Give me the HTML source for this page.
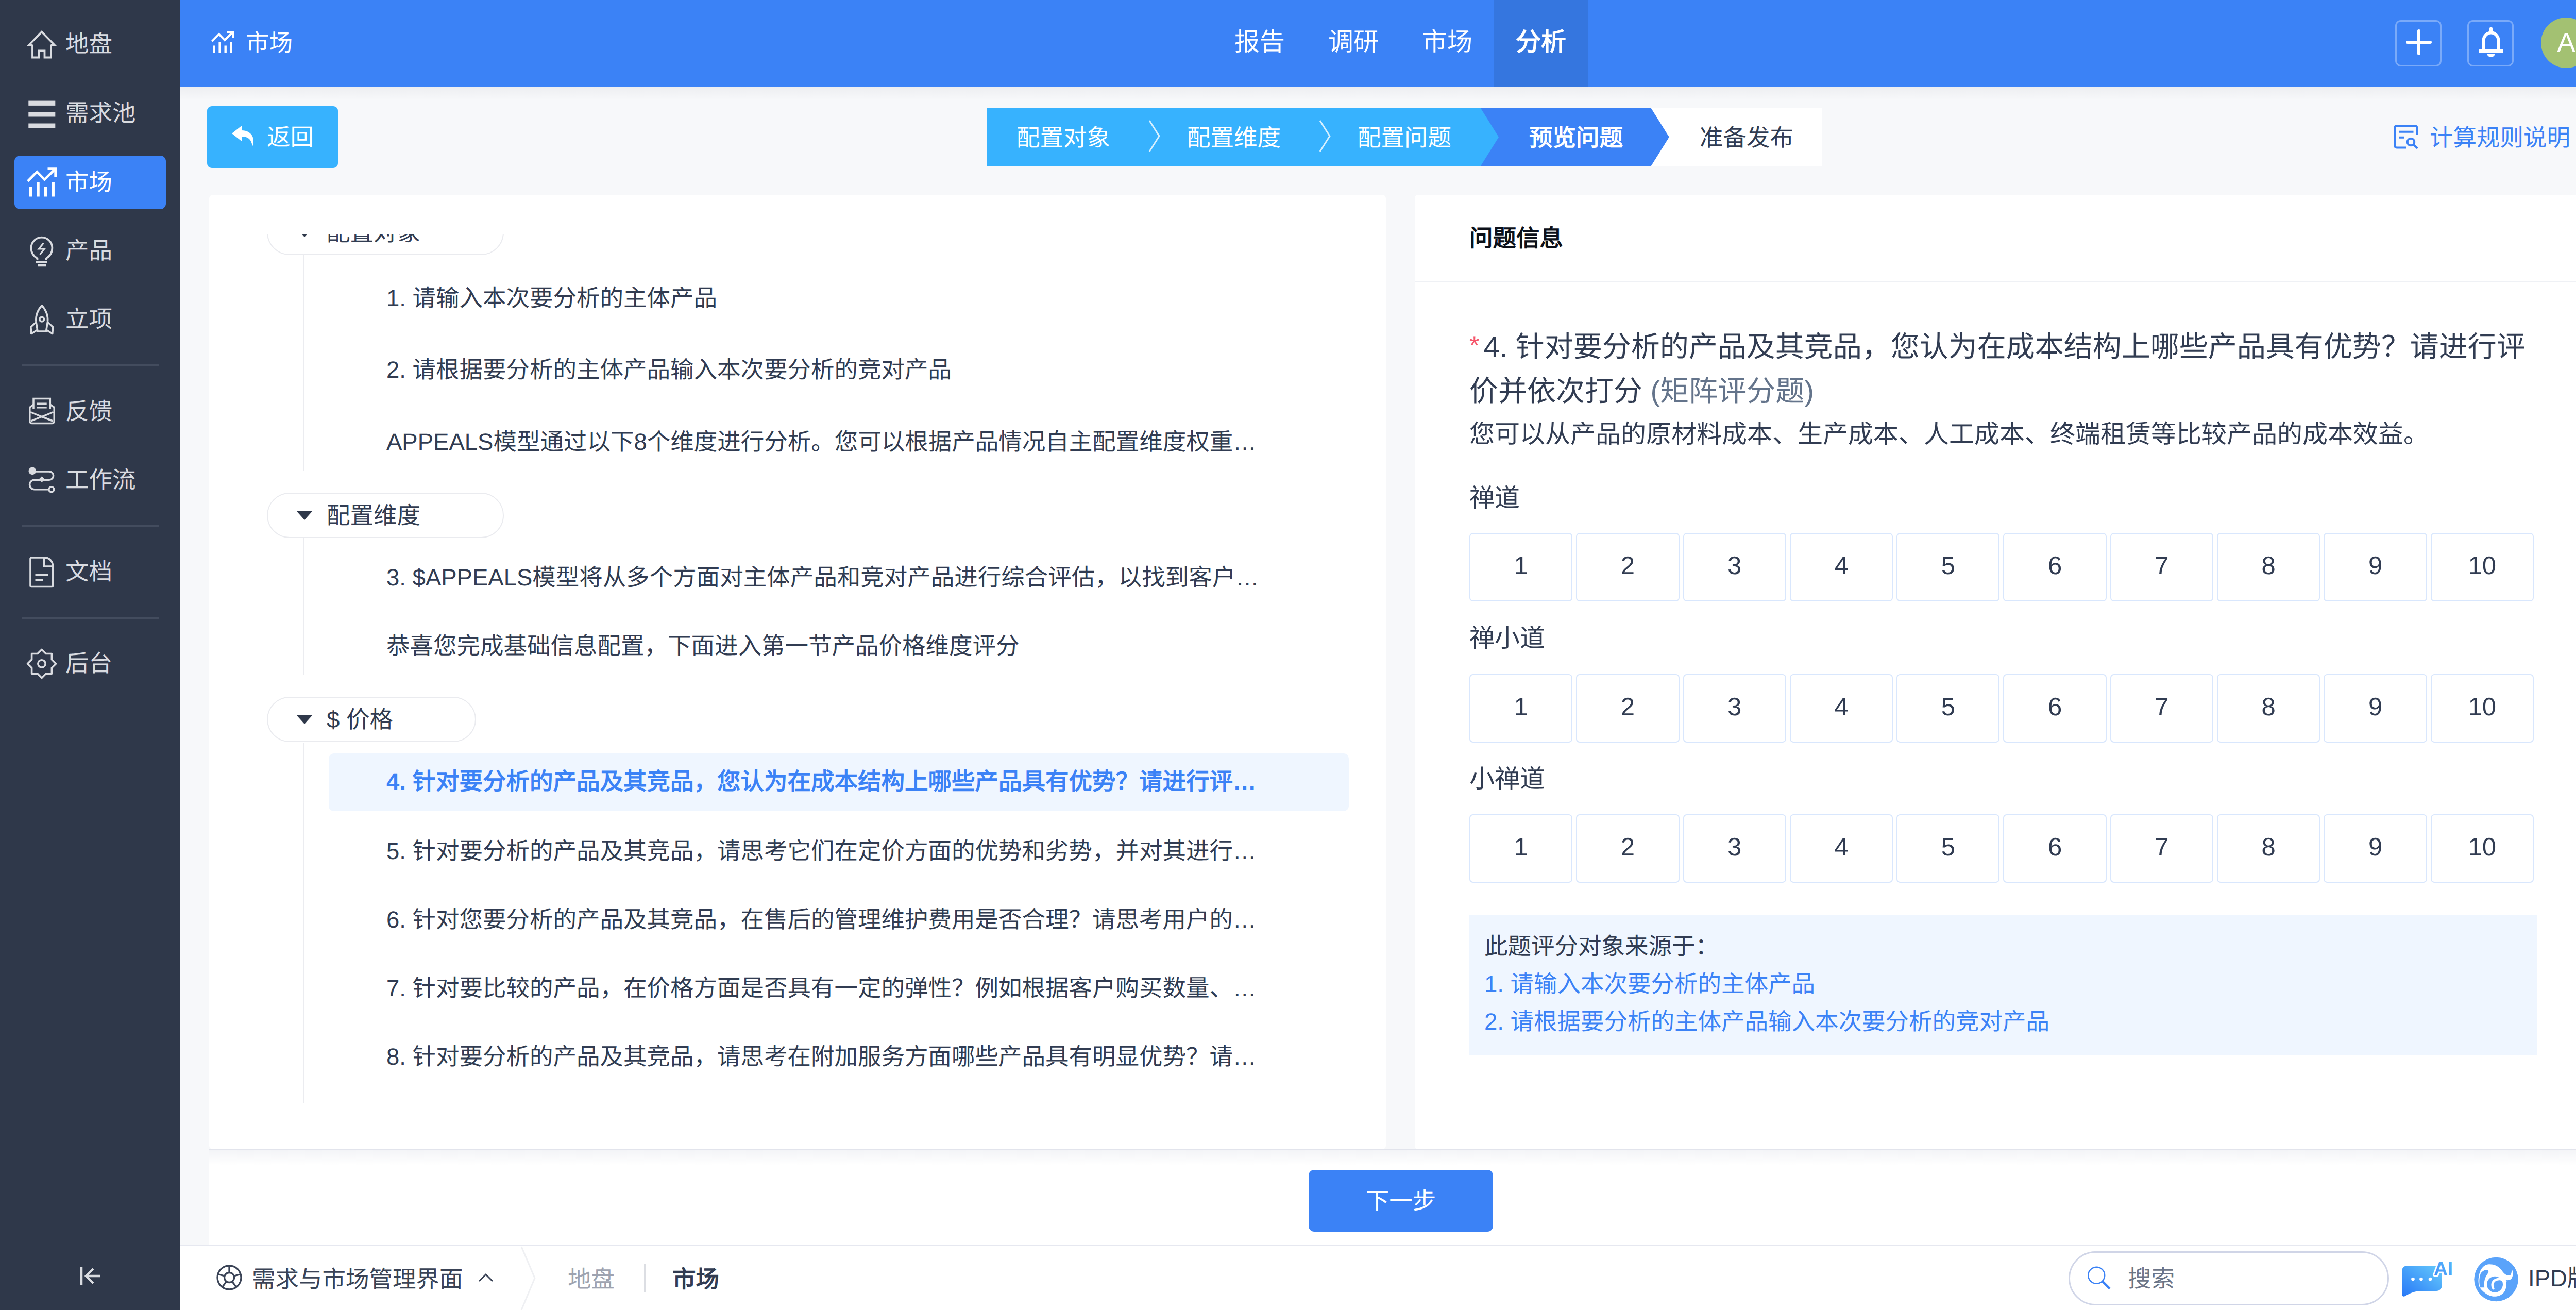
<!DOCTYPE html>
<html lang="zh-CN">
<head>
<meta charset="utf-8">
<title>市场 - 分析</title>
<style>
*{box-sizing:border-box;margin:0;padding:0}
html,body{width:5120px;height:2542px;overflow:hidden}
body{position:relative;background:#f7f8fa;font-family:"Liberation Sans",sans-serif;font-size:45.5px;color:#313c52;line-height:1;text-rendering:geometricPrecision}
.abs{position:absolute}
svg{display:block;overflow:visible}

/* ---------- sidebar ---------- */
#sidebar{position:absolute;left:0;top:0;width:350px;height:2542px;background:#2f384a}
.mi{position:absolute;left:28px;width:294px;height:103.500px;border-radius:11px;color:#d9dbe0;font-size:45.5px}
.mi.on{background:#3b82f6;color:#fff}
.mi svg{position:absolute;left:24px;top:23px;width:58px;height:58px}
.mi span{position:absolute;left:99px;top:0;height:103px;line-height:103px;white-space:nowrap}
.mdiv{position:absolute;left:42px;width:266px;height:3.5px;background:#434c5e}

/* ---------- header ---------- */
#header{position:absolute;left:350px;top:0;width:4736px;height:168px;background:#3b82f6}
#hshadow{position:absolute;left:350px;top:168px;width:4736px;height:26px;background:linear-gradient(#edeef1,#f7f8fa)}
.nav{position:absolute;top:0;height:168px;width:182px;text-align:center;color:#fff;font-size:49px;line-height:165px}
.nav.on{background:#3576df;font-weight:bold}
.hbtn{position:absolute;top:39px;width:90px;height:90px;border:3.5px solid rgba(255,255,255,.32);border-radius:11px}

/* ---------- toolbar ---------- */
#back{position:absolute;left:402px;top:206px;width:254px;height:120px;border-radius:9px;background:#37b2fe;color:#fff}
.step{position:absolute;top:210px;height:112px;color:#fff;line-height:116px;white-space:nowrap}

/* ---------- panels ---------- */
.panel{position:absolute;top:378px;height:1852px;background:#fff;border-radius:7px;overflow:hidden}
.pill{position:absolute;left:112px;height:88px;border:2px solid #eaebef;border-radius:44px;background:#fff;line-height:86px;white-space:nowrap}
.pill i{position:absolute;left:54.500px;top:33px;width:0;height:0;border-left:16px solid transparent;border-right:16px solid transparent;border-top:18px solid #2f384a}
.pill span{position:absolute;left:114px;top:0}
.vline{position:absolute;left:181.500px;width:2px;background:#ebecf0}
.row{position:absolute;left:232px;width:1980px;height:112px;border-radius:10px;line-height:114px;padding-left:112px;padding-right:170px;white-space:nowrap;overflow:hidden;text-overflow:ellipsis}
.row.on{background:#eff6ff;color:#3b82f6;font-weight:bold;line-height:110px}

.rlabel{position:absolute;left:106px;font-size:49px;line-height:67px;white-space:nowrap}
.rate{position:absolute;left:106px;width:2066px;height:133px;display:flex;gap:7px}
.rate div{flex:1;height:133px;border:2.5px solid #d9e7fd;border-radius:7px;text-align:center;font-size:49px;line-height:124px}

/* ---------- footer ---------- */
#footer{position:absolute;left:406px;top:2229px;width:4624px;height:188px;background:#fff;border-top:2.500px solid #e2e4ec}
#footer:before{content:"";position:absolute;left:0;top:0;width:100%;height:30px;background:linear-gradient(#f3f4f7,#fff)}
#next{position:absolute;left:2540px;top:2270px;width:358px;height:120px;border-radius:11px;background:#3b82f6;color:#fff;text-align:center;line-height:122px}
#bottombar{position:absolute;left:350px;top:2415.500px;width:4770px;height:127px;background:#fff;border-top:2.500px solid #e6e8f0}

/* ---------- scrollbar ---------- */
#sbtrack{position:absolute;left:5086px;top:0;width:34px;height:2416px;background:#f7f8fa}
#sbthumb{position:absolute;left:5086px;top:0;width:34px;height:2404px;background:#acadaf;border-radius:0 0 3px 3px}
</style>
</head>
<body>

<!-- SIDEBAR -->
<div id="sidebar">
  <div class="mi" style="top:34px"><svg viewBox="0 0 58 58" fill="none" stroke="currentColor" stroke-width="3.800"><path d="M11 31H3.500L29 4.800 54.500 31H47M11 29.500V54.500H23.500V41.500H34.500V54.500H47V29.500"/></svg><span>地盘</span></div>
  <div class="mi" style="top:168px"><svg viewBox="0 0 58 58" fill="currentColor"><rect x="3.300" y="4.600" width="52" height="9.300"/><rect x="3.300" y="26.500" width="52" height="9"/><rect x="3.300" y="48.500" width="52" height="9"/></svg><span>需求池</span></div>
  <div class="mi on" style="top:302px"><svg viewBox="0 0 58 58" fill="none" stroke="currentColor" stroke-width="4.800"><path d="M7.300 56.400V37.500M21.900 56.400V28M36.500 56.400V37.500M51.100 56.400V28" stroke-width="5.700"/><path d="M2 26.500 19.800 8.400 34.400 23.500 55 3"/><path d="M40.500 2.600H55.700V18"/></svg><span>市场</span></div>
  <div class="mi" style="top:435px"><svg viewBox="0 0 58 58" fill="none" stroke="currentColor" stroke-width="3.700"><path d="M20.500 47V43.500C12 38.500 8.400 31 8.400 23.100a20.500 20.500 0 0 1 41 0C49.400 31 46 38.500 37.500 43.500V47"/><path d="M18 50.500H39.600M21.500 57.200H37" stroke-width="4.200"/><path d="M32.500 13.500 23.500 25H34L25.500 36" stroke-width="3.200"/></svg><span>产品</span></div>
  <div class="mi" style="top:568px"><svg viewBox="0 0 58 58" fill="none" stroke="currentColor" stroke-width="3.600" stroke-linejoin="round"><path d="M29.200 1.800C21 11 17 22 18 33L21 52H37.500L40.500 33C41.500 22 37.500 11 29.200 1.800Z"/><circle cx="29.200" cy="28.600" r="4.300"/><path d="M18.300 34 7.800 43.500 8.800 56.500 20 49.500M40.200 34 50.700 43.500 49.700 56.500 38.500 49.500"/></svg><span>立项</span></div>
  <div class="mdiv" style="top:707px"></div>
  <div class="mi" style="top:747px"><svg viewBox="0 0 58 58" fill="none" stroke="currentColor" stroke-width="3.500"><path d="M13 24V3.500H45.300V24"/><path d="M19.700 13.300H38.700M19.700 20.700H38.700"/><path d="M13 15 5.800 20.500V47.500a4 4 0 0 0 4 4H49.200a4 4 0 0 0 4-4V20.500L45.300 15"/><path d="M7 29.500 29.200 38.500 51.500 29.500M8 47 29.200 38.500 50.500 47"/></svg><span>反馈</span></div>
  <div class="mi" style="top:880px"><svg viewBox="0 0 58 58" fill="none" stroke="currentColor" stroke-width="3.600"><circle cx="10.800" cy="10.900" r="7.300" fill="currentColor" stroke="none"/><path d="M17 11.900H43.500a8.150 8.150 0 0 1 0 16.300H14.900a9.300 9.300 0 0 0 0 18.600H42.500"/><circle cx="47.800" cy="46.800" r="5"/><path d="M29.200 21.300 35 27.100 29.200 32.900 23.400 27.100Z" fill="currentColor" stroke="none"/></svg><span>工作流</span></div>
  <div class="mdiv" style="top:1018px"></div>
  <div class="mi" style="top:1058px"><svg viewBox="0 0 58 58" fill="none" stroke="currentColor" stroke-width="3.600"><path d="M33.400 0.900H9a2 2 0 0 0-2 2V55.500a2 2 0 0 0 2 2H48.600a2 2 0 0 0 2-2V18.100C50.600 8 44 0.900 33.400 0.900V18.100H50.600"/><path d="M16.500 34.600H41.900M16.500 44.500H31.300"/></svg><span>文档</span></div>
  <div class="mdiv" style="top:1197px"></div>
  <div class="mi" style="top:1236px"><svg viewBox="0 0 58 58" fill="none" stroke="currentColor" stroke-width="3.600" stroke-linejoin="round"><path d="M29.0 1.4 L37.1 9.5 L48.4 9.5 L48.4 20.8 L56.5 28.9 L48.4 37.0 L48.4 48.3 L37.1 48.3 L29.0 56.4 L20.9 48.3 L9.6 48.3 L9.6 37.0 L1.5 28.9 L9.6 20.8 L9.6 9.5 L20.9 9.5Z"/><circle cx="29" cy="28.900" r="7.200"/></svg><span>后台</span></div>
  <svg class="abs" style="left:155px;top:2459px;width:40px;height:34px" viewBox="0 0 40 34" fill="none" stroke="#d9dbe0" stroke-width="4.500"><path d="M3 0v34M12 17h28M26 3 12 17l14 14"/></svg>
</div>

<!-- HEADER -->
<div id="header"></div>
<div id="hshadow"></div>
<div id="sbtrack"></div><div id="sbthumb"></div>

<svg class="abs" style="left:409.500px;top:59.500px;width:44px;height:44px" viewBox="0 0 58 58" fill="none" stroke="#fff" stroke-width="5.200"><path d="M7.300 56.400V37.500M21.900 56.400V28M36.500 56.400V37.500M51.100 56.400V28" stroke-width="5.800"/><path d="M2 26.500 19.800 8.400 34.400 23.500 55 3"/><path d="M40.500 2.600H55.700V18"/></svg>
<div class="abs" style="left:477px;top:0;height:168px;line-height:168px;color:#fff;white-space:nowrap">市场</div>

<div class="nav" style="left:2354px">报告</div>
<div class="nav" style="left:2536px">调研</div>
<div class="nav" style="left:2718px">市场</div>
<div class="nav on" style="left:2900px">分析</div>

<div class="hbtn" style="left:4649px"><svg class="abs" style="left:18px;top:15px;width:50px;height:50px" viewBox="0 0 50 50" stroke="#fff" stroke-width="6" stroke-linecap="round"><path d="M25 3v44M3 25h44"/></svg></div>
<div class="hbtn" style="left:4789px"><svg class="abs" style="left:19.500px;top:11.500px;width:46px;height:57px" viewBox="0 0 46 57" fill="none" stroke="#fff" stroke-width="6"><path d="M23 1.500v6" stroke-linecap="round"/><path d="M8.500 42V25a14.500 15.500 0 0 1 29 0v17"/><path d="M0 44.800h46" stroke-width="6.500"/><path d="M15.500 50.500h15a7.500 6.500 0 0 1-15 0z" fill="#fff" stroke="none"/></svg></div>
<div class="abs" style="left:4932px;top:34px;width:98px;height:98px;border-radius:49px;background:#a3c172;color:#fff;text-align:center;line-height:98px;font-size:52.5px">A</div>

<!-- TOOLBAR -->
<div id="back">
  <svg class="abs" style="left:48px;top:38px;width:48px;height:42px" viewBox="0 0 48 42" fill="#fff"><path d="M19 0 0 15l19 15V21c12 0 19 5 21 19 6-16-2-31-21-31z"/></svg>
  <div class="abs" style="left:116px;top:0;line-height:122px;white-space:nowrap">返回</div>
</div>

<div class="abs" style="left:1916px;top:210px;width:993px;height:112px;background:#37b2fe"></div>
<svg class="abs" style="left:2874px;top:210px;width:366px;height:112px" viewBox="0 0 366 112"><path d="M0 0h331l35 56-35 56H0l35-56z" fill="#3b82f6"/></svg>
<svg class="abs" style="left:3205px;top:210px;width:331px;height:112px" viewBox="0 0 331 112"><path d="M0 0h331v112H0l35-56z" fill="#fff"/></svg>
<div class="step" style="left:1973px">配置对象</div>
<div class="step" style="left:2304px">配置维度</div>
<div class="step" style="left:2635px">配置问题</div>
<div class="step" style="left:2968px;font-weight:bold">预览问题</div>
<div class="step" style="left:3299px;color:#313c52">准备发布</div>
<svg class="abs" style="left:2229px;top:233px;width:24px;height:62px" viewBox="0 0 24 62" fill="none" stroke="#fff" stroke-opacity=".8" stroke-width="3"><path d="M2 1l19 30L2 61"/></svg>
<svg class="abs" style="left:2560px;top:233px;width:24px;height:62px" viewBox="0 0 24 62" fill="none" stroke="#fff" stroke-opacity=".8" stroke-width="3"><path d="M2 1l19 30L2 61"/></svg>

<svg class="abs" style="left:4646px;top:241.500px;width:48px;height:48px" viewBox="0 0 48 48" fill="none" stroke="#3b82f6" stroke-width="4"><path d="M25 44.600H6a4 4 0 0 1-4-4V6a4 4 0 0 1 4-4h35.500a4 4 0 0 1 4 4v14M10 13.800h28.500M10 24.700h11"/><circle cx="33.500" cy="33.500" r="6.800"/><path d="M38.500 38.500l8 7.500"/></svg>
<div class="abs" style="left:4716px;top:210px;line-height:116px;color:#3b82f6;white-space:nowrap">计算规则说明</div>

<!-- LEFT PANEL -->
<div class="panel" style="left:406px;width:2284px">
 <div class="abs" style="left:0;top:77px;width:2283px;height:1775px;overflow:hidden">
  <div class="abs" id="tree" style="left:0;top:-77px;width:2283px;height:1852px">
  <div class="pill" style="top:28.500px;width:460px"><i></i><span>配置对象</span></div>
  <div class="vline" style="top:115px;height:420px"></div>
  <div class="row" style="top:144px">1. 请输入本次要分析的主体产品</div>
  <div class="row" style="top:283px">2. 请根据要分析的主体产品输入本次要分析的竞对产品</div>
  <div class="row" style="top:423px">APPEALS模型通过以下8个维度进行分析。您可以根据产品情况自主配置维度权重，权重之和必须等于100%</div>
  <div class="pill" style="top:577.500px;width:460px"><i></i><span>配置维度</span></div>
  <div class="vline" style="top:666px;height:266px"></div>
  <div class="row" style="top:686px">3. $APPEALS模型将从多个方面对主体产品和竞对产品进行综合评估，以找到客户的核心需求和竞争差异</div>
  <div class="row" style="top:819px">恭喜您完成基础信息配置，下面进入第一节产品价格维度评分</div>
  <div class="pill" style="top:974px;width:406px"><i></i><span>$ 价格</span></div>
  <div class="vline" style="top:1063px;height:699px"></div>
  <div class="row on" style="top:1084px">4. 针对要分析的产品及其竞品，您认为在成本结构上哪些产品具有优势？请进行评价并依次打分</div>
  <div class="row" style="top:1217px">5. 针对要分析的产品及其竞品，请思考它们在定价方面的优势和劣势，并对其进行评价并依次打分</div>
  <div class="row" style="top:1350px">6. 针对您要分析的产品及其竞品，在售后的管理维护费用是否合理？请思考用户的使用成本并依次打分</div>
  <div class="row" style="top:1483px">7. 针对要比较的产品，在价格方面是否具有一定的弹性？例如根据客户购买数量、合作年限等给予优惠</div>
  <div class="row" style="top:1616px">8. 针对要分析的产品及其竞品，请思考在附加服务方面哪些产品具有明显优势？请进行评价并依次打分</div>
  </div>
 </div>
</div>

<!-- RIGHT PANEL -->
<div class="panel" style="left:2746px;width:2284px">
  <div class="abs" style="left:106px;top:40px;line-height:90px;font-weight:bold;color:#0c1019;white-space:nowrap">问题信息</div>
  <div class="abs" style="left:0;top:167.5px;width:2284px;height:2.5px;background:#eff1f5"></div>
  <div class="abs" style="left:106px;top:253px;width:2090px;font-size:56px;line-height:83px"><span style="color:#f6566b;font-size:50px;position:relative;top:-5px;margin-right:8px">*</span>4. 针对要分析的产品及其竞品，您认为在成本结构上哪些产品具有优势？请进行评价并依次打分 <span style="color:#64748b">(矩阵评分题)</span></div>
  <div class="abs" style="left:106px;top:428px;font-size:49px;line-height:74px;white-space:nowrap">您可以从产品的原材料成本、生产成本、人工成本、终端租赁等比较产品的成本效益。</div>

  <div class="rlabel" style="top:556px">禅道</div>
  <div class="rate" style="top:656px"><div>1</div><div>2</div><div>3</div><div>4</div><div>5</div><div>6</div><div>7</div><div>8</div><div>9</div><div>10</div></div>
  <div class="rlabel" style="top:828px">禅小道</div>
  <div class="rate" style="top:930px"><div>1</div><div>2</div><div>3</div><div>4</div><div>5</div><div>6</div><div>7</div><div>8</div><div>9</div><div>10</div></div>
  <div class="rlabel" style="top:1101px">小禅道</div>
  <div class="rate" style="top:1202px"><div>1</div><div>2</div><div>3</div><div>4</div><div>5</div><div>6</div><div>7</div><div>8</div><div>9</div><div>10</div></div>

  <div class="abs" style="left:106px;top:1398px;width:2073px;height:272px;background:#eff6ff;padding:24px 29px;line-height:73px;white-space:nowrap">
    <div>此题评分对象来源于：</div>
    <div style="color:#3b82f6">1. 请输入本次要分析的主体产品</div>
    <div style="color:#3b82f6">2. 请根据要分析的主体产品输入本次要分析的竞对产品</div>
  </div>
</div>

<!-- FOOTER -->
<div id="footer"></div>
<div id="next">下一步</div>

<!-- BOTTOM BAR -->
<div id="bottombar"></div>
<svg class="abs" style="left:420px;top:2454px;width:50px;height:50px" viewBox="0 0 50 50" fill="none" stroke="#3a4356" stroke-width="3.300"><circle cx="25" cy="25" r="23"/><circle cx="25" cy="25" r="9.500"/><path d="M25 2v13.500M47 18.500 34 22M38.500 43.500l-8-11M11.500 43.500l8-11M3 18.500 16 22"/></svg>
<div class="abs" style="left:489px;top:2420px;line-height:126px;white-space:nowrap;color:#3a4356">需求与市场管理界面</div>
<svg class="abs" style="left:928px;top:2470px;width:30px;height:18px" viewBox="0 0 30 18" fill="none" stroke="#3a4356" stroke-width="3"><path d="M2 16 15 3l13 13"/></svg>
<svg class="abs" style="left:1010px;top:2419px;width:30px;height:123px" viewBox="0 0 30 123" fill="none" stroke="#eff0f3" stroke-width="3"><path d="M2 0l26 61L2 123"/></svg>
<div class="abs" style="left:1102px;top:2420px;line-height:126px;white-space:nowrap;color:#9ea3b0">地盘</div>
<div class="abs" style="left:1250px;top:2452px;width:4px;height:56px;background:#dcdee3"></div>
<div class="abs" style="left:1305px;top:2420px;line-height:126px;white-space:nowrap;font-weight:bold;color:#313c52">市场</div>

<div class="abs" style="left:4015px;top:2428px;width:622px;height:105px;border:3px solid #d0d5e7;border-radius:53px;background:#fff"></div>
<svg class="abs" style="left:4051px;top:2456px;width:46px;height:46px" viewBox="0 0 46 46" fill="none" stroke="#3b82f6" stroke-width="2.500"><circle cx="18.200" cy="18.800" r="16"/><path d="M29.500 30l14.500 14.500" stroke-width="4.500"/></svg>
<div class="abs" style="left:4130px;top:2420px;line-height:123px;white-space:nowrap;color:#6b7588">搜索</div>

<svg class="abs" style="left:4660px;top:2444px;width:102px;height:74px" viewBox="0 0 102 74"><defs><linearGradient id="g1" x1="0" y1="1" x2="1" y2="0"><stop offset="0" stop-color="#2878f7"/><stop offset="1" stop-color="#66cbfc"/></linearGradient><linearGradient id="g2" x1="0" y1="1" x2="1" y2="0"><stop offset="0" stop-color="#3f8ff8"/><stop offset="1" stop-color="#5cb8fb"/></linearGradient></defs><path d="M12 12h58a10 10 0 0 1 10 10v28a11 11 0 0 1-11 11H40c-12 0-22 4-30 9-4 3-8 2-8-3V22a10 10 0 0 1 10-10z" fill="url(#g1)"/><circle cx="23.500" cy="38" r="3.300" fill="#fff"/><circle cx="39.500" cy="38" r="3.300" fill="#fff"/><circle cx="57" cy="38" r="3.300" fill="#fff"/><text x="64" y="30" font-family="Liberation Sans, sans-serif" font-weight="bold" font-size="37" fill="url(#g2)" stroke="#fff" stroke-width="6" paint-order="stroke" stroke-linejoin="round">AI</text></svg>

<svg class="abs" style="left:4802px;top:2440px;width:86px;height:86px" viewBox="0 0 86 86"><circle cx="43" cy="42.500" r="42.700" fill="#5aa3fa"/><path d="M9.500 36C11 25 17 15 27 13.500C36 12.500 46 15 53 24C58 31 62 35.500 69 35C73 34 73 27 73.400 22C76 28 76.500 36 72.500 41.500C69 45 64 44 60.500 44C64 52 63 62 57.500 68.500C51 76 38 78.500 27 72.500C20 68.500 13.500 63 10.500 57C8 50 8 42 9.500 36Z" fill="#fff"/><path d="M12.800 31.500C15.500 27 20 24.300 24.500 24.300C28 24.300 29 26.500 27.500 30C24 35 21 40 20.200 46C19.500 50 19.800 54 20.200 58.300L12 58.300C9.500 50 9.800 40 12.800 31.500Z" fill="#5aa3fa"/><circle cx="40.500" cy="52.300" r="15.500" fill="#5aa3fa"/><path d="M61 46.500C55 41 45 40.500 39.500 45C35 49 34.500 55 37.500 60" fill="none" stroke="#fff" stroke-width="4.600" stroke-linecap="round"/><circle cx="45.500" cy="57.300" r="6.600" fill="#5aa3fa"/></svg>
<div class="abs" style="left:4907px;top:2420px;line-height:122px;white-space:nowrap;color:#313c52">IPD版3.2</div>

</body>
</html>
